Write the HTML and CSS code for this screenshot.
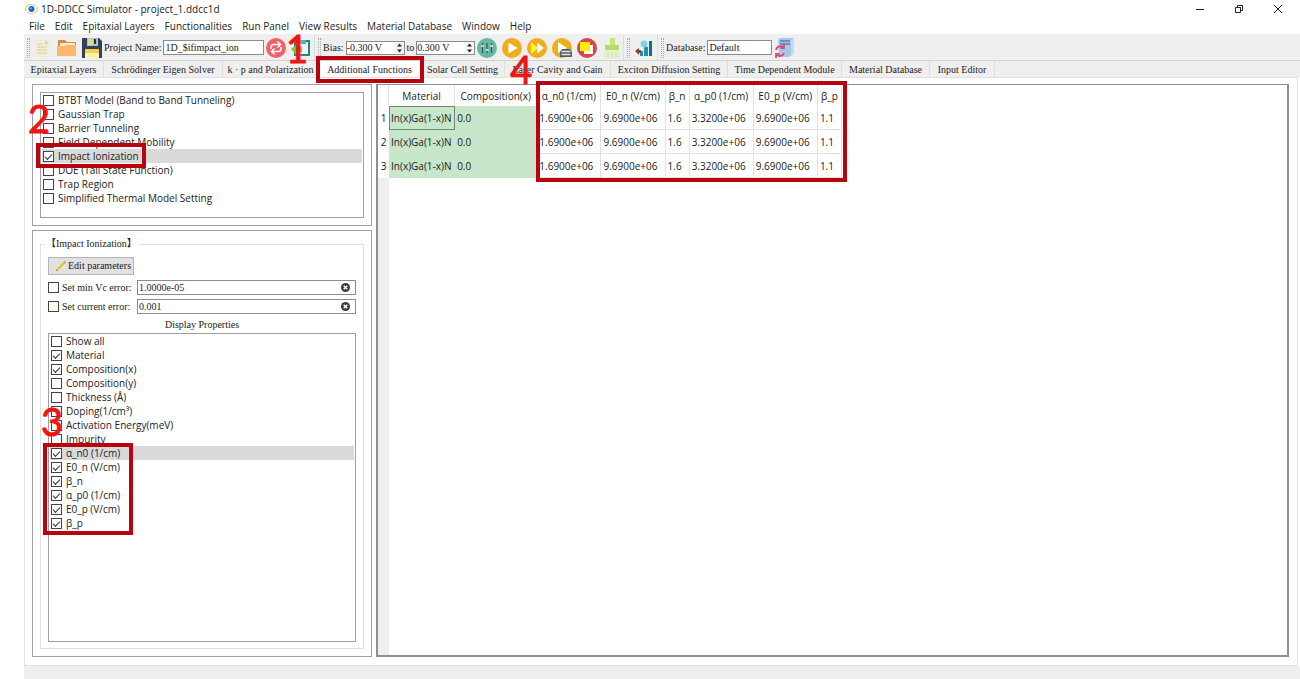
FILE: index.html
```html
<!DOCTYPE html>
<html lang="en">
<head>
<meta charset="utf-8">
<title>1D-DDCC Simulator - project_1.ddcc1d</title>
<link rel="stylesheet" href="styles.css">
</head>
<body>
<div class="app">
  <header class="titlebar">
    <svg class="app-logo" viewBox="0 0 16 14" aria-hidden="true"><path d="M2 9A6 5 0 0 1 5 3M14 5a6 5 0 0 1-3 6" fill="none" stroke="#f0d060" stroke-width="1.6"/><path d="M5 2.5a7 5 0 0 1 8 2M3 10a7 5 0 0 0 7 1.800" fill="none" stroke="#c6d4ea" stroke-width="1.200"/><circle cx="8" cy="7" r="3.200" fill="#1565d8"/><circle cx="7.200" cy="6.200" r="1.200" fill="#5fb4ff"/></svg>
    <h1 class="app-title">1D-DDCC Simulator - project_1.ddcc1d</h1>
    <div class="window-buttons">
      <button type="button" aria-label="Minimize"><svg viewBox="0 0 10 10"><path d="M1 5.500h8"/></svg></button>
      <button type="button" aria-label="Restore"><svg viewBox="0 0 10 10"><path d="M1.500 3.500h5v5h-5zM3.500 3.500v-2h5v5h-2"/></svg></button>
      <button type="button" aria-label="Close"><svg viewBox="0 0 10 10"><path d="M1 1l8 8M9 1l-8 8"/></svg></button>
    </div>
  </header>

  <nav class="menubar">
    <button type="button">File</button><button type="button">Edit</button><button type="button">Epitaxial Layers</button><button type="button">Functionalities</button><button type="button">Run Panel</button><button type="button">View Results</button><button type="button">Material Database</button><button type="button">Window</button><button type="button">Help</button>
  </nav>

  <div class="toolbar">
    <div class="tool-group group-project">
      <span class="handle"></span>
      <div class="tool-set">
      <button type="button" class="tool" aria-label="New"><svg viewBox="0 0 20 20"><path d="M3 2h10l4 4v13H3z" fill="#f3eed6"/><path d="M13 2v4h4z" fill="#d8cfa0"/><path d="M5 6h6M5 9h10M5 12h10M5 15h10" stroke="#d6cda6"/></svg></button>
      <button type="button" class="tool" aria-label="Open"><svg viewBox="0 0 20 20"><path d="M1 2h7l2 2h9v5H1z" fill="#d98b35"/><path d="M3 5h15v8H3z" fill="#f4ead8"/><path d="M0 8h7l2-1h10v11H0z" fill="#fbb76b"/></svg></button>
      <button type="button" class="tool" aria-label="Save"><svg viewBox="0 0 20 20"><path d="M0 0h17l3 3v17H0z" fill="#33415c"/><path d="M5 0h11v8H5z" fill="#a9c3d3"/><path d="M6 1h5v6H6z" fill="#e7d68b"/><path d="M12 1h2v5h-2z" fill="#26344b"/><path d="M3 11h14v9H3z" fill="#f5d14c"/><path d="M3 15h14v5H3z" fill="#fff0ad"/></svg></button>
      </div>
      <label for="project">Project Name:</label>
      <input id="project" class="field project-field" type="text" value="1D_$ifimpact_ion">
      <div class="tool-set">
      <button type="button" class="tool" aria-label="Sync"><svg viewBox="0 0 20 20"><circle cx="10" cy="10" r="10" fill="#f4606c"/><path d="M5 11V9.500a3 3 0 0 1 3-3h5.500M15 9v1.500a3 3 0 0 1-3 3H6.500M11.500 3.500l3 3-3 3M8.500 10.500l-3 3 3 3" fill="none" stroke="#fff" stroke-width="1.500"/></svg></button>
      <div class="tool-anchor">
        <button type="button" class="tool" aria-label="Layers"><svg viewBox="0 0 20 20"><path d="M4 3h14v14H4z" fill="#e7f4f2" stroke="#26867c" stroke-width="2"/><path d="M8 2h7v4H8z" fill="#49b8a7"/><path d="M0 11l6-5v3h5v5H6v4z" fill="#72ca42"/></svg></button>
        <span class="step step-1">1</span>
      </div>
      </div>
    </div>
    <div class="tool-group group-bias">
      <span class="handle"></span>
      <label for="bias-from">Bias:</label>
      <div class="spin"><input id="bias-from" type="text" value="-0.300 V"><span class="arrows"><button type="button" aria-label="Increase start"><svg viewBox="0 0 7 4"><path d="M0 4l3.500-4L7 4z"/></svg></button><button type="button" aria-label="Decrease start"><svg viewBox="0 0 7 4"><path d="M0 0l3.500 4L7 0z"/></svg></button></span></div>
      <label for="bias-to">to</label>
      <div class="spin"><input id="bias-to" type="text" value="0.300 V"><span class="arrows"><button type="button" aria-label="Increase end"><svg viewBox="0 0 7 4"><path d="M0 4l3.500-4L7 4z"/></svg></button><button type="button" aria-label="Decrease end"><svg viewBox="0 0 7 4"><path d="M0 0l3.500 4L7 0z"/></svg></button></span></div>
      <div class="tool-set">
      <button type="button" class="tool" aria-label="Bias settings"><svg viewBox="0 0 20 20"><circle cx="10" cy="10" r="10" fill="#6bb5a2"/><path d="M5.500 5v10M10 5v10M14.500 5v10" stroke="#2c5d59" stroke-width="1.200"/><path d="M4 8h3M8.500 12h3M13 8h3" stroke="#e8f3ef" stroke-width="1.500"/></svg></button>
      <button type="button" class="tool" aria-label="Run"><svg viewBox="0 0 20 20"><circle cx="10" cy="10" r="10" fill="#efae1b"/><path d="M6.500 4.500l9 5.500-9 5.500z" fill="#fff"/></svg></button>
      <div class="tool-anchor"><button type="button" class="tool" aria-label="Run all"><svg viewBox="0 0 20 20"><circle cx="10" cy="10" r="10" fill="#efae1b"/><path d="M10 4.500l7 5.500-7 5.500z" fill="#fff"/><path d="M4 4l7 6-7 6z" fill="#fff829"/></svg></button><span class="step step-4">4</span></div>
      <button type="button" class="tool" aria-label="Run queue"><svg viewBox="0 0 20 20"><circle cx="10" cy="10" r="10" fill="#efae1b"/><path d="M6 4l9 6-9 5z" fill="#fff"/><path d="M10 11h8l2 3v5H8v-5z" fill="#53606c"/><path d="M9.500 13.500h9M9.500 16.500h9" stroke="#dce5e9" stroke-width="1.500"/></svg></button>
      <button type="button" class="tool" aria-label="Stop"><svg viewBox="0 0 20 20"><circle cx="10" cy="10" r="10" fill="#d9464b"/><path d="M7 7h9v9H7z" fill="#fff"/><path d="M3 4h10v9H3z" fill="#fff200"/></svg></button>
      <button type="button" class="tool" aria-label="Clean"><svg viewBox="0 0 20 20"><path d="M8 0h5v8H8z" fill="#c4e67a"/><path d="M3 7h14v5H3z" fill="#b4dd6e"/><path d="M3 12h14l1 8H2z" fill="#e5f0cd"/><path d="M6 14v6M10 14v6M14 14v6" stroke="#d2e3b5"/></svg></button>
      </div>
    </div>
    <div class="tool-group group-chart">
      <span class="handle"></span>
      <button type="button" class="tool" aria-label="Plot results"><svg viewBox="0 0 20 20"><path d="M6 13h3v5H6zM10 9h4v9h-4z" fill="#1f8fb4"/><path d="M15 3h3v15h-3z" fill="#136a8a"/><circle cx="10" cy="6" r="3.500" fill="#7cd4e5"/><path d="M1 13l4-3v2h2v3H5v2z" fill="#7a4a35"/></svg></button>
    </div>
    <div class="tool-group group-db">
      <span class="handle"></span>
      <label for="database">Database:</label>
      <input id="database" class="field database-field" type="text" value="Default">
      <button type="button" class="tool" aria-label="Reload database"><svg viewBox="0 0 20 20"><path d="M4 1l4-1h12l-2 16-3 3H5z" fill="#a5c8ea"/><path d="M17 2l3-2v15l-3 4z" fill="#c4daf0"/><path d="M6 3h10M6 6h10" stroke="#4f83ba" stroke-width="1.500"/><path d="M2 12a4.500 4.500 0 0 1 8-2M10 6v4H6.500M10 15a4.500 4.500 0 0 1-8 1M2 20v-4h3.500" fill="none" stroke="#e5486f" stroke-width="1.800"/></svg></button>
    </div>
  </div>

  <div class="tabs" role="tablist">
    <button type="button" role="tab">Epitaxial Layers</button>
    <button type="button" role="tab">Schrödinger Eigen Solver</button>
    <button type="button" role="tab">k · p and Polarization</button>
    <div class="tab-slot"><button type="button" role="tab" aria-selected="true" class="active">Additional Functions</button><span class="mark mark-tab"></span></div>
    <button type="button" role="tab">Solar Cell Setting</button>
    <button type="button" role="tab">Laser Cavity and Gain</button>
    <button type="button" role="tab">Exciton Diffusion Setting</button>
    <button type="button" role="tab">Time Dependent Module</button>
    <button type="button" role="tab">Material Database</button>
    <button type="button" role="tab">Input Editor</button>
  </div>

  <main class="pane">
    <aside class="sidebar">
      <section class="panel">
        <ul class="checklist functions">
          <li><label><input type="checkbox">BTBT Model (Band to Band Tunneling)</label></li>
          <li><label><input type="checkbox">Gaussian Trap</label><span class="step step-2">2</span></li>
          <li><label><input type="checkbox">Barrier Tunneling</label></li>
          <li><label><input type="checkbox">Field Dependent Mobility</label></li>
          <li class="selected"><label><input type="checkbox" checked>Impact Ionization</label><span class="mark mark-impact"></span></li>
          <li><label><input type="checkbox">DOE (Tail State Function)</label></li>
          <li><label><input type="checkbox">Trap Region</label></li>
          <li><label><input type="checkbox">Simplified Thermal Model Setting</label></li>
        </ul>
      </section>
      <section class="panel panel-grow">
        <fieldset class="group">
          <legend>【Impact Ionization】</legend>
          <div class="group-body">
            <button type="button" class="edit-button"><svg viewBox="0 0 12 12" aria-hidden="true"><path d="M1.500 10.500l8-8" stroke="#e3c22c" stroke-width="2"/><path d="M9.300 2.700l1.200-1.200" stroke="#d98a84" stroke-width="2"/><path d="M.500 11.500l1.500-2 .700.700z" fill="#7b6a3a"/></svg>Edit parameters</button>
            <div class="error-row">
              <label><input type="checkbox">Set min Vc error:</label>
              <div class="clearable"><input type="text" aria-label="Min Vc error" value="1.0000e-05"><button type="button" aria-label="Clear"><svg viewBox="0 0 10 10"><circle cx="5" cy="5" r="5" fill="#3c3c3c"/><path d="M3 3l4 4M7 3l-4 4" stroke="#fff" stroke-width="1.500"/></svg></button></div>
            </div>
            <div class="error-row">
              <label><input type="checkbox">Set current error:</label>
              <div class="clearable"><input type="text" aria-label="Current error" value="0.001"><button type="button" aria-label="Clear"><svg viewBox="0 0 10 10"><circle cx="5" cy="5" r="5" fill="#3c3c3c"/><path d="M3 3l4 4M7 3l-4 4" stroke="#fff" stroke-width="1.500"/></svg></button></div>
            </div>
            <h2 class="display-title">Display Properties</h2>
            <ul class="checklist properties">
              <li><label><input type="checkbox">Show all</label></li>
              <li><label><input type="checkbox" checked>Material</label></li>
              <li><label><input type="checkbox" checked>Composition(x)</label></li>
              <li><label><input type="checkbox">Composition(y)</label></li>
              <li><label><input type="checkbox">Thickness (Å)</label></li>
              <li><label><input type="checkbox">Doping(1/cm³)</label></li>
              <li><label><input type="checkbox">Activation Energy(meV)</label><span class="step step-3">3</span></li>
              <li><label><input type="checkbox">Impurity</label></li>
              <li class="selected"><label><input type="checkbox" checked>α_n0 (1/cm)</label><span class="mark mark-props"></span></li>
              <li><label><input type="checkbox" checked>E0_n (V/cm)</label></li>
              <li><label><input type="checkbox" checked>β_n</label></li>
              <li><label><input type="checkbox" checked>α_p0 (1/cm)</label></li>
              <li><label><input type="checkbox" checked>E0_p (V/cm)</label></li>
              <li><label><input type="checkbox" checked>β_p</label></li>
            </ul>
          </div>
        </fieldset>
      </section>
    </aside>

    <section class="grid-panel">
      <div class="table-wrap">
        <table>
          <colgroup><col class="c-row"><col class="c-mat"><col class="c-comp"><col class="c-num"><col class="c-num"><col class="c-beta"><col class="c-num"><col class="c-num"><col class="c-beta"></colgroup>
          <thead><tr><td></td><th>Material</th><th>Composition(x)</th><th>α_n0 (1/cm)</th><th>E0_n (V/cm)</th><th>β_n</th><th>α_p0 (1/cm)</th><th>E0_p (V/cm)</th><th>β_p</th></tr></thead>
          <tbody>
            <tr><th>1</th><td class="green current">In(x)Ga(1-x)N</td><td class="green">0.0</td><td>1.6900e+06</td><td>9.6900e+06</td><td>1.6</td><td>3.3200e+06</td><td>9.6900e+06</td><td>1.1</td></tr>
            <tr><th>2</th><td class="green">In(x)Ga(1-x)N</td><td class="green">0.0</td><td>1.6900e+06</td><td>9.6900e+06</td><td>1.6</td><td>3.3200e+06</td><td>9.6900e+06</td><td>1.1</td></tr>
            <tr><th>3</th><td class="green">In(x)Ga(1-x)N</td><td class="green">0.0</td><td>1.6900e+06</td><td>9.6900e+06</td><td>1.6</td><td>3.3200e+06</td><td>9.6900e+06</td><td>1.1</td></tr>
          </tbody>
        </table>
        <span class="mark mark-table"></span>
      </div>
    </section>
  </main>
  <footer class="statusbar"></footer>
</div>
</body>
</html>
```
FILE: styles.css
```css
* { box-sizing: border-box; }
body {
  margin: 0;
  background: #fff;
  color: #222;
  font: 10px/14px "Open Sans", "Noto Sans", sans-serif;
}
button, input { font: inherit; color: inherit; }
button { background: none; border: 0; padding: 0; }
svg { display: block; }

.app {
  display: flex;
  flex-direction: column;
  min-height: 100vh;
  margin-left: 24px;
}

/* Title and menus */
.titlebar { display: flex; align-items: center; height: 17px; gap: 2px; }
.app-logo { width: 15px; height: 14px; }
.app-title { margin: 0; font-size: 10px; font-weight: 400; }
.window-buttons { display: flex; gap: 29px; margin-left: auto; padding-right: 17px; }
.window-buttons svg { width: 10px; height: 10px; fill: none; stroke: #222; }
.menubar { display: flex; gap: 10px; padding: 2px 5px 0; height: 17px; }
.menubar button { line-height: 15px; white-space: nowrap; }

/* Toolbar */
.toolbar {
  display: flex;
  height: 27px;
  padding-top: 1px;
  background: #efefef;
  border-bottom: 1px solid #d2d2d2;
  font: 10px/14px "Liberation Serif", serif;
}
.tool-group { display: flex; align-items: center; gap: 2px; padding-left: 3px; border-right: 1px solid #dcdcdc; white-space: nowrap; }
.tool-group:last-child { border-right: 0; }
.handle { width: 3px; height: 20px; border-left: 1px dotted #aaa; border-right: 1px dotted #aaa; flex: none; }
.tool { display: block; flex: none; width: 20px; height: 20px; }
.tool svg { width: 20px; height: 20px; }
.tool-set { display: flex; gap: 5px; }
.tool-anchor { position: relative; }
.group-project { width: 291px; padding-right: 3px; }
.group-bias { width: 309px; }
.group-chart { width: 34px; gap: 4px; }
.field { height: 15px; padding: 0 1px; border: 1px solid #8c8c8c; background: #fff; }
.project-field { flex: 1; min-width: 0; }
.database-field { width: 65px; }
.spin { display: flex; width: 59px; height: 14px; border: 1px solid #8c8c8c; background: #fff; }
.spin input { flex: 1; min-width: 0; border: 0; padding: 0; background: none; }
.arrows { display: flex; flex-direction: column; justify-content: center; gap: 2px; padding: 0 2px; background: #f4f4f4; }
.arrows svg { width: 5px; height: 4px; fill: #222; }

/* Tabs */
.tabs {
  display: grid;
  grid-template-columns: 80px 119px 96px 102px 84px 106px 117px 114px 88px 65px;
  height: 16px;
  background: #efefef;
  font: 10px/14px "Liberation Serif", serif;
}
.tabs button { width: 100%; height: 16px; padding-top: 2px; border-right: 1px solid #dedede; white-space: nowrap; }
.tab-slot { position: relative; }
.tabs .active { background: #fff; }

/* Main area */
.pane {
  flex: 1;
  display: flex;
  gap: 4px;
  margin-right: 2px;
  padding: 6px 8px 8px 7px;
  border: 1px solid #e2e2e2;
}
.sidebar { flex: none; width: 340px; display: flex; flex-direction: column; gap: 4px; }
.panel { padding: 7px; border: 1px solid #9d9fa2; }
.panel-grow { flex: 1; display: flex; padding-top: 6px; }
.statusbar { height: 13px; background: #efefef; }

.checklist { margin: 0; padding: 0 1px; list-style: none; border: 1px solid #9d9fa2; }
.checklist li { position: relative; height: 14px; padding-left: 1px; }
.checklist label { display: flex; align-items: center; gap: 4px; white-space: nowrap; }
.selected { background: #d9d9d9; }
.functions { min-height: 126px; }
.properties { flex: 1; }

input[type="checkbox"] {
  appearance: none;
  flex: none;
  width: 11px;
  height: 11px;
  margin: 0;
  border: 1px solid #444;
  background: #fff;
}
input[type="checkbox"]:checked::after {
  content: "";
  display: block;
  width: 6px;
  height: 3px;
  margin: 2px 1px;
  border: solid #333;
  border-width: 0 0 1px 1px;
  transform: rotate(-45deg);
}

/* Impact ionization form */
.group {
  flex: 1;
  display: flex;
  min-width: 0;
  margin: 0;
  padding: 0 7px 6px;
  border: 1px solid #e0e0e0;
  font: 10px/14px "Liberation Serif", "Noto Sans CJK TC", serif;
}
.group legend { padding: 0 2px; margin-left: -4px; }
.group-body { flex: 1; display: flex; flex-direction: column; min-width: 0; }
.edit-button {
  align-self: flex-start;
  display: flex;
  align-items: center;
  gap: 1px;
  height: 18px;
  margin: 6px 0 5px;
  padding: 0 2px 0 6px;
  background: #e1e1e1;
  border: 1px solid #b4b4b4;
}
.edit-button svg { width: 12px; height: 12px; }
.error-row { display: grid; grid-template-columns: 89px 1fr; height: 15px; margin-bottom: 4px; }
.error-row label { display: flex; align-items: center; gap: 3px; white-space: nowrap; }
.clearable { display: flex; align-items: center; padding-right: 5px; border: 1px solid #8c8c8c; }
.clearable input { flex: 1; min-width: 0; height: 13px; border: 0; padding: 0 1px; }
.clearable svg { width: 9px; height: 9px; }
.display-title { margin: 0 0 2px; font-size: 10px; line-height: 13px; font-weight: 400; text-align: center; }
.properties { font: 10px/14px "Open Sans", "Noto Sans", sans-serif; }

/* Data table */
.grid-panel {
  flex: 1;
  min-width: 0;
  border: 2px solid #8e9094;
  border-top-width: 1px;
  background: linear-gradient(to right, #efefef 11px, #fff 11px);
}
.table-wrap { position: relative; width: 464px; }
table { width: 464px; table-layout: fixed; border-collapse: separate; border-spacing: 0; background: #fff; }
.c-row { width: 11px; }
.c-mat { width: 66px; }
.c-comp { width: 82px; }
.c-num { width: 64px; }
.c-beta { width: 24px; }
th, td { height: 24px; padding: 0 2px; border-right: 1px solid #e2e2e2; border-bottom: 1px solid #e2e2e2; font-weight: 400; text-align: left; white-space: nowrap; }
thead th, thead td { height: 21px; padding: 0; border-bottom: 0; text-align: center; }
tbody th { padding: 0; border: 0; text-align: center; }
.green { background: #c8e6c9; border-color: #c8e6c9; }
.current { border: 1px solid #6e8a70; padding: 0 1px; }

/* Tutorial annotations */
.step { position: absolute; z-index: 3; color: #f01414; font: 38px/38px Lato, sans-serif; -webkit-text-stroke: 1px #f01414; pointer-events: none; }
.step-1 { left: -5px; top: -9px; }
.step-2 { left: -14px; top: -8px; }
.step-3 { left: -9px; top: -16px; }
.step-4 { left: -17px; top: 12px; }
.mark { position: absolute; z-index: 2; border: 4px solid #b90410; pointer-events: none; }
.mark-tab { inset: -5px -3px -6px -3px; }
.mark-impact { left: -6px; top: -6px; width: 110px; height: 25px; }
.mark-props { left: -7px; top: -3px; width: 90px; height: 92px; }
.mark-table { left: 158px; right: -5px; top: -4px; bottom: -4px; }
```
